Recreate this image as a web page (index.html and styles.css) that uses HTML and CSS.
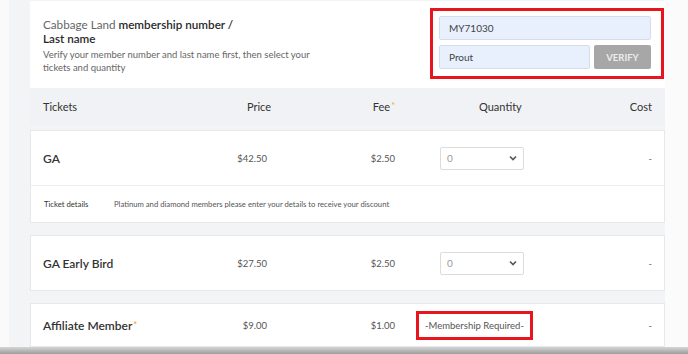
FILE: index.html
```html
<!DOCTYPE html>
<html lang="en">
<head>
  <meta charset="UTF-8" />
  <title>Tickets</title>
  <link rel="stylesheet" href="styles.css">
</head>
<body>

  <div class="page">
    <div class="member">
      <div class="member-text">
        <div class="member-title"><span class="light">Cabbage Land</span> membership number /<br>Last name</div>
        <p class="member-note">Verify your member number and last name first, then select your<br>tickets and quantity</p>
      </div>
      <div class="verify-box">
        <div class="field">MY71030</div>
        <div class="verify-line">
          <div class="field short">Prout</div>
          <button class="verify-btn" type="button">VERIFY</button>
        </div>
      </div>
    </div>

    <div class="grid head">
      <div>Tickets</div>
      <div class="price">Price</div>
      <div class="fee">Fee<span class="star">*</span></div>
      <div class="qty-head">Quantity</div>
      <div class="cost">Cost</div>
    </div>

    <div class="card first">
      <div class="grid row">
        <div class="name">GA</div>
        <div class="price">$42.50</div>
        <div class="fee">$2.50</div>
        <div class="qty">
          <div class="qty-select"><span>0</span>
            <svg width="8" height="6" viewBox="0 0 8 6"><path d="M1 1.5 L4 4.5 L7 1.5" fill="none" stroke="#555" stroke-width="1.6"/></svg>
          </div>
        </div>
        <div class="cost">-</div>
      </div>
      <div class="details">
        <div class="details-label">Ticket details</div>
        <div>Platinum and diamond members please enter your details to receive your discount</div>
      </div>
    </div>

    <div class="card">
      <div class="grid row">
        <div class="name">GA Early Bird</div>
        <div class="price">$27.50</div>
        <div class="fee">$2.50</div>
        <div class="qty">
          <div class="qty-select"><span>0</span>
            <svg width="8" height="6" viewBox="0 0 8 6"><path d="M1 1.5 L4 4.5 L7 1.5" fill="none" stroke="#555" stroke-width="1.6"/></svg>
          </div>
        </div>
        <div class="cost">-</div>
      </div>
    </div>

    <div class="card">
      <div class="grid row short-row">
        <div class="name">Affiliate Member<span class="star">*</span></div>
        <div class="price">$9.00</div>
        <div class="fee">$1.00</div>
        <div class="qty">
          <div class="required">-Membership Required-</div>
        </div>
        <div class="cost">-</div>
      </div>
    </div>
  </div>

  <!-- dark strip along the bottom of the capture -->
  <div class="bottom-shade"></div>

</body>
</html>
```

FILE: styles.css
```css
body {
  margin: 0;
  height: 354px;
  overflow: hidden;
  font-family: 'Lato', 'Open Sans', sans-serif;
  color: #333;
  background: linear-gradient(to right, #fafafb 0, #fafafb 9px, #f3f4f6 9px, #f3f4f6 665px, #fbfbfb 665px);
}

.page {
  width: 635px;
  margin-left: 30px;
  padding-top: 1px;
}

.member {
  display: flex;
  justify-content: space-between;
  height: 87px;
  padding: 0 1px 0 13px;
  background: #fff;
}

.member-text {
  padding-top: 16px;
}

.member-title {
  font-size: 11.7px;
  line-height: 14px;
  font-weight: 600;
  color: #2a2a2a;
}

.member-title .light {
  font-weight: 400;
  color: #666;
}

.member-note {
  margin: 3px 0 0;
  font-size: 9.5px;
  line-height: 13px;
  color: #666;
}

.verify-box {
  display: flex;
  flex-direction: column;
  gap: 5px;
  width: 212px;
  height: 53px;
  margin-top: 7px;
  padding: 5px 10px 7px 6px;
  border: 3px solid #e8141e;
}

.verify-line {
  display: flex;
  gap: 4px;
}

.field {
  height: 22px;
  line-height: 22px;
  padding: 0 9px;
  border: 1px solid #d6dde8;
  border-radius: 2px;
  background: #e8f0fe;
  font-size: 10px;
  color: #444;
}

.field.short {
  flex: 1;
}

.verify-btn {
  width: 57px;
  height: 24px;
  padding: 0;
  border: none;
  border-radius: 2px;
  background: #a7a7a7;
  color: #ececec;
  font-family: inherit;
  font-size: 9.5px;
  font-weight: 700;
}

.grid {
  display: grid;
  grid-template-columns: 172px 52px 128px 187px 1fr;
  align-items: center;
  padding: 0 13px;
}

.head {
  height: 37px;
  background: #f1f2f5;
  font-size: 11px;
  color: #333;
}

.head .price {
  margin-right: -4px;
}

.price, .fee, .cost {
  text-align: right;
}

.star {
  color: #f4a23a;
  font-size: 9px;
  margin-left: 1px;
  position: relative;
  top: -2px;
}

.qty-head {
  padding-left: 84px;
}

.card {
  margin-top: 12px;
  background: #fff;
  border: 1px solid #e6e8eb;
}

.card.first {
  margin-top: 5px;
}

.card .grid {
  padding: 0 12px;
}

.row {
  height: 54px;
  font-size: 9.5px;
  color: #555;
}

.short-row {
  height: 42px;
}

.name {
  font-size: 12px;
  font-weight: 600;
  color: #333;
}

.row .cost {
  color: #666;
}

.qty-select {
  display: flex;
  justify-content: space-between;
  align-items: center;
  width: 70px;
  height: 21px;
  margin-left: 45px;
  padding: 0 6px;
  border: 1.5px solid #dcdcdc;
  border-radius: 2px;
  color: #999;
  font-size: 10px;
}

.required {
  display: inline-block;
  margin-left: 21px;
  padding: 0 6px;
  height: 23px;
  line-height: 23px;
  border: 3px solid #e8141e;
  color: #555;
  font-size: 9.5px;
}

.details {
  display: flex;
  align-items: center;
  height: 36px;
  padding: 0 13px;
  border-top: 1px solid #eceef0;
  font-size: 7.7px;
  color: #555;
}

.details-label {
  width: 70px;
  color: #333;
}

.bottom-shade {
  position: fixed;
  left: 0;
  right: 0;
  bottom: 0;
  height: 7px;
  background: linear-gradient(#d6d6d6, #9c9c9c);
}
```
